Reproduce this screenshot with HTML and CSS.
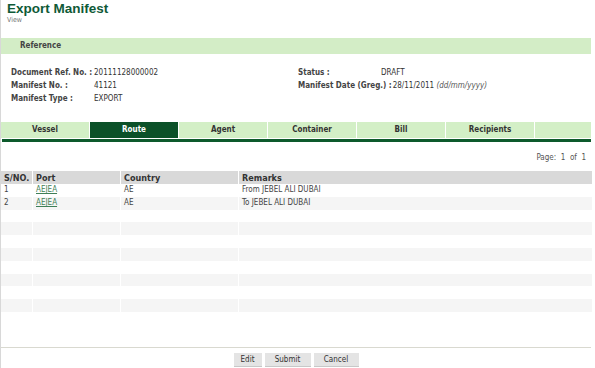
FILE: index.html
```html
<!DOCTYPE html>
<html lang="en">
<head>
    <meta charset="UTF-8">
    <title>Export Manifest - View</title>
    <link rel="stylesheet" href="styles.css">
</head>
<body>

    <div class="page-head">
        <h1>Export Manifest</h1>
        <div class="sub">View</div>
    </div>

    <div class="section-bar">Reference</div>

    <div class="ref-grid">
        <div class="col">
            <div class="field"><span class="lbl">Document Ref. No. :</span><span>20111128000002</span></div>
            <div class="field"><span class="lbl">Manifest No. :</span><span>41121</span></div>
            <div class="field"><span class="lbl">Manifest Type :</span><span>EXPORT</span></div>
        </div>
        <div class="col">
            <div class="field"><span class="lbl">Status :</span><span>DRAFT</span></div>
            <div class="field"><span class="lbl">Manifest Date (Greg.) :</span><span>28/11/2011 <i>(dd/mm/yyyy)</i></span></div>
        </div>
    </div>

    <div class="tabs">
        <div class="tab">Vessel</div>
        <div class="tab active">Route</div>
        <div class="tab">Agent</div>
        <div class="tab">Container</div>
        <div class="tab">Bill</div>
        <div class="tab">Recipients</div>
        <div class="tab"></div>
    </div>
    <div class="tab-line"></div>

    <div class="pager">Page:&nbsp; 1&nbsp; of&nbsp; 1</div>

    <table class="grid">
        <thead>
            <tr><th class="c1">S/NO.</th><th class="c2">Port</th><th class="c3">Country</th><th>Remarks</th></tr>
        </thead>
        <tbody>
            <tr><td>1</td><td><a href="#">AEJEA</a></td><td>AE</td><td>From JEBEL ALI DUBAI</td></tr>
            <tr><td>2</td><td><a href="#">AEJEA</a></td><td>AE</td><td>To JEBEL ALI DUBAI</td></tr>
            <tr><td></td><td></td><td></td><td></td></tr>
            <tr><td></td><td></td><td></td><td></td></tr>
            <tr><td></td><td></td><td></td><td></td></tr>
            <tr><td></td><td></td><td></td><td></td></tr>
            <tr><td></td><td></td><td></td><td></td></tr>
            <tr><td></td><td></td><td></td><td></td></tr>
            <tr><td></td><td></td><td></td><td></td></tr>
            <tr><td></td><td></td><td></td><td></td></tr>
        </tbody>
    </table>

    <div class="actions">
        <button class="btn btn-edit">Edit</button>
        <button class="btn btn-submit">Submit</button>
        <button class="btn btn-cancel">Cancel</button>
    </div>

</body>
</html>
```

FILE: styles.css
```css
body {
    margin: 0;
    width: 594px;
    height: 368px;
    border-left: 1px solid #d8d8d8;
    font-family: "DejaVu Sans Condensed", "DejaVu Sans", Verdana, sans-serif;
    font-size: 8px;
    color: #333;
    background: #fff;
    overflow: hidden;
    box-sizing: border-box;
}

.page-head { padding: 2px 0 0 6px; height: 38px; box-sizing: border-box; }
.page-head h1 {
    margin: 0; font-family: "Liberation Sans", Arial, sans-serif;
    font-size: 13.5px; line-height: 14px; color: #0f5a37; font-weight: bold;
}
.page-head .sub { font-size: 7px; line-height: 8px; color: #777; }

.section-bar {
    margin-right: 3px;
    height: 16px; line-height: 16px;
    padding-left: 19px;
    background: #d3edc6;
    font-weight: bold; color: #444;
}

.ref-grid { display: flex; padding: 12px 0 0 10px; height: 67px; box-sizing: border-box; }
.ref-grid .col { width: 287px; }
.field { display: flex; height: 13px; line-height: 13px; }
.field .lbl { min-width: 82px; font-weight: bold; color: #444; padding-right: 1px; }
.field i { color: #555; }

.tabs { display: flex; height: 16px; margin-right: 3px; background: #d3efc6; border-top: 1px solid #fff; }
.tab {
    width: 88px; text-align: center; line-height: 16px;
    font-weight: bold; color: #333;
    border-right: 1px solid #fff;
}
.tab:last-child { flex: 1; border-right: none; }
.tab.active { background: #0b5128; color: #fff; }
.tab-line { height: 3px; margin: 1px 3px 0 1px; background: #0d5a2c; }

.pager { text-align: right; padding: 10px 8px 0 0; height: 29px; box-sizing: border-box; line-height: 12px; color: #555; }

.grid { border-collapse: collapse; width: 591px; table-layout: fixed; }
.grid th {
    background: #d9d9d9; text-align: left; font-size: 9px; color: #333;
    height: 13px; padding: 0 0 0 3px; border-left: 1px solid #fff;
}
.grid th:first-child, .grid td:first-child { border-left: none; }
.grid .c1 { width: 28px; }
.grid .c2 { width: 84px; }
.grid .c3 { width: 114px; }
.grid td { height: 12.8px; padding: 0 0 0 3px; line-height: 12px; border-left: 1px solid #fff; color: #444; }
.grid tbody tr:nth-child(even) td { background: #f5f5f5; }
.grid a { color: #3f7f57; }

.actions {
    margin-top: 35px;
    border-top: 1px solid #d9d9d0;
    padding-top: 5px;
    display: flex; justify-content: center; gap: 3px;
    margin-right: 3px;
}
.btn {
    font-family: inherit; font-size: 8px; color: #333;
    background: #e4e4e4; border: none; border-bottom: 1px solid #c8c8c8;
    height: 14px; padding: 0;
}
.btn-edit { width: 28px; }
.btn-submit { width: 46px; }
.btn-cancel { width: 45px; }
```
